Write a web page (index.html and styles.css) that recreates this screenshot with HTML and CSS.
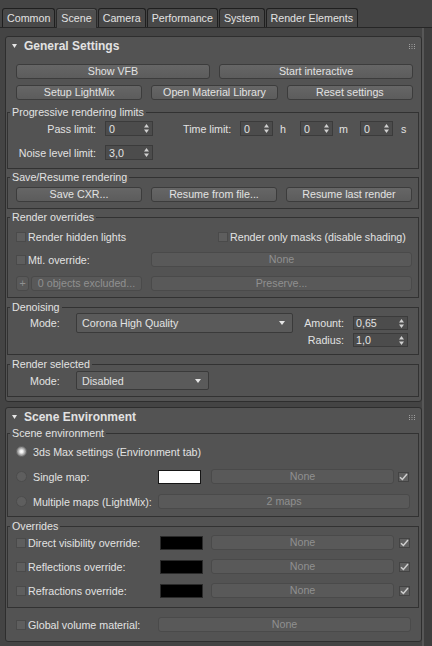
FILE: index.html
```html
<!DOCTYPE html>
<html>
<head>
<meta charset="utf-8">
<link rel="stylesheet" href="styles.css">
</head>
<body>
<div class="tabs">
  <div class="tab">Common</div>
  <div class="tab active">Scene</div>
  <div class="tab">Camera</div>
  <div class="tab">Performance</div>
  <div class="tab">System</div>
  <div class="tab">Render Elements</div>
</div>

<div class="page">
<div class="col">
<div class="rollout r1">
  <div class="rhead">
    <svg class="tri" width="5" height="4" viewBox="0 0 5 4"><polygon points="0,0 5,0 2.5,4" fill="#e6e6e6"/></svg>
    <span class="rtitle">General Settings</span>
    <svg class="grip" width="6" height="5" viewBox="0 0 6 5"><g fill="#a0a0a0"><rect x="0" y="0" width="1" height="1"/><rect x="2.5" y="0" width="1" height="1"/><rect x="5" y="0" width="1" height="1"/><rect x="0" y="2" width="1" height="1"/><rect x="2.5" y="2" width="1" height="1"/><rect x="5" y="2" width="1" height="1"/><rect x="0" y="4" width="1" height="1"/><rect x="2.5" y="4" width="1" height="1"/><rect x="5" y="4" width="1" height="1"/></g></svg>
  </div>
  <div class="btnrow two top"><div class="btn">Show VFB</div><div class="btn">Start interactive</div></div>
  <div class="btnrow three top2"><div class="btn">Setup LightMix</div><div class="btn">Open Material Library</div><div class="btn">Reset settings</div></div>

  <fieldset class="grp g-prog">
    <legend>Progressive rendering limits</legend>
    <div class="row">
      <span class="lbl lbl-lim">Pass limit:</span>
      <div class="spin sp-lim"><span>0</span><svg class="arr" width="5" height="9" viewBox="0 0 5 9"><polygon points="0,3.5 2.5,0 5,3.5" fill="#d0d0d0"/><polygon points="0,5.5 5,5.5 2.5,9" fill="#d0d0d0"/></svg></div>
      <span class="lbl lbl-time">Time limit:</span>
      <div class="spin sp-t"><span>0</span><svg class="arr" width="5" height="9" viewBox="0 0 5 9"><polygon points="0,3.5 2.5,0 5,3.5" fill="#d0d0d0"/><polygon points="0,5.5 5,5.5 2.5,9" fill="#d0d0d0"/></svg></div>
      <span class="unit u-h">h</span>
      <div class="spin sp-t"><span>0</span><svg class="arr" width="5" height="9" viewBox="0 0 5 9"><polygon points="0,3.5 2.5,0 5,3.5" fill="#d0d0d0"/><polygon points="0,5.5 5,5.5 2.5,9" fill="#d0d0d0"/></svg></div>
      <span class="unit u-m">m</span>
      <div class="spin sp-t"><span>0</span><svg class="arr" width="5" height="9" viewBox="0 0 5 9"><polygon points="0,3.5 2.5,0 5,3.5" fill="#d0d0d0"/><polygon points="0,5.5 5,5.5 2.5,9" fill="#d0d0d0"/></svg></div>
      <span class="unit u-s">s</span>
    </div>
    <div class="row gap9">
      <span class="lbl lbl-lim">Noise level limit:</span>
      <div class="spin sp-lim"><span>3,0</span><svg class="arr" width="5" height="9" viewBox="0 0 5 9"><polygon points="0,3.5 2.5,0 5,3.5" fill="#d0d0d0"/><polygon points="0,5.5 5,5.5 2.5,9" fill="#d0d0d0"/></svg></div>
    </div>
  </fieldset>

  <fieldset class="grp g-save">
    <legend>Save/Resume rendering</legend>
    <div class="btnrow three"><div class="btn">Save CXR...</div><div class="btn">Resume from file...</div><div class="btn">Resume last render</div></div>
  </fieldset>

  <fieldset class="grp g-ovr">
    <legend>Render overrides</legend>
    <div class="row ovr-a">
      <div class="cbl"><span class="chk"></span><span>Render hidden lights</span></div>
      <div class="cbl"><span class="chk"></span><span>Render only masks (disable shading)</span></div>
    </div>
    <div class="row ovr-b gap8">
      <div class="cbl"><span class="chk"></span><span>Mtl. override:</span></div>
      <div class="btn dis">None</div>
    </div>
    <div class="row ovr-c gap9">
      <div class="btn dis plus">+</div>
      <div class="btn dis excl">0 objects excluded...</div>
      <div class="btn dis pres">Preserve...</div>
    </div>
  </fieldset>

  <fieldset class="grp g-den">
    <legend>Denoising</legend>
    <div class="den">
      <div class="modebox">
        <span class="mode">Mode:</span>
        <div class="dd dd-den"><span>Corona High Quality</span><svg width="6" height="4" viewBox="0 0 6 4"><polygon points="0,0 6,0 3,4" fill="#e6e6e6"/></svg></div>
      </div>
      <div class="dcol">
        <div class="drow"><span class="dlbl">Amount:</span><div class="spin sp-d"><span>0,65</span><svg class="arr" width="5" height="9" viewBox="0 0 5 9"><polygon points="0,3.5 2.5,0 5,3.5" fill="#d0d0d0"/><polygon points="0,5.5 5,5.5 2.5,9" fill="#d0d0d0"/></svg></div></div>
        <div class="drow"><span class="dlbl">Radius:</span><div class="spin sp-d"><span>1,0</span><svg class="arr" width="5" height="9" viewBox="0 0 5 9"><polygon points="0,3.5 2.5,0 5,3.5" fill="#d0d0d0"/><polygon points="0,5.5 5,5.5 2.5,9" fill="#d0d0d0"/></svg></div></div>
      </div>
    </div>
  </fieldset>

  <fieldset class="grp g-sel">
    <legend>Render selected</legend>
    <div class="modebox">
      <span class="mode">Mode:</span>
      <div class="dd dd-sel"><span>Disabled</span><svg width="6" height="4" viewBox="0 0 6 4"><polygon points="0,0 6,0 3,4" fill="#e6e6e6"/></svg></div>
    </div>
  </fieldset>
</div>

<div class="rollout r2">
  <div class="rhead">
    <svg class="tri" width="5" height="4" viewBox="0 0 5 4"><polygon points="0,0 5,0 2.5,4" fill="#e6e6e6"/></svg>
    <span class="rtitle">Scene Environment</span>
    <svg class="grip" width="6" height="5" viewBox="0 0 6 5"><g fill="#a0a0a0"><rect x="0" y="0" width="1" height="1"/><rect x="2.5" y="0" width="1" height="1"/><rect x="5" y="0" width="1" height="1"/><rect x="0" y="2" width="1" height="1"/><rect x="2.5" y="2" width="1" height="1"/><rect x="5" y="2" width="1" height="1"/><rect x="0" y="4" width="1" height="1"/><rect x="2.5" y="4" width="1" height="1"/><rect x="5" y="4" width="1" height="1"/></g></svg>
  </div>

  <fieldset class="grp g-env">
    <legend>Scene environment</legend>
    <div class="frow">
      <div class="rbl"><span class="radio on"></span><span>3ds Max settings (Environment tab)</span></div>
    </div>
    <div class="frow gap10">
      <div class="rbl w142"><span class="radio"></span><span>Single map:</span></div>
      <span class="sw white"></span>
      <div class="btn dis nb e-nb">None</div>
      <span class="chk on e-ck"><svg width="9" height="8" viewBox="0 0 9 8"><path d="M1 4.2 L3.4 6.5 L8 1" fill="none" stroke="#cfcfcf" stroke-width="1.5"/></svg></span>
    </div>
    <div class="frow gap10">
      <div class="rbl w142"><span class="radio"></span><span>Multiple maps (LightMix):</span></div>
      <div class="btn dis maps">2 maps</div>
    </div>
  </fieldset>

  <fieldset class="grp g-ov2">
    <legend>Overrides</legend>
    <div class="frow">
      <div class="cbl w144"><span class="chk"></span><span>Direct visibility override:</span></div>
      <span class="sw black"></span>
      <div class="btn dis nb o-nb">None</div>
      <span class="chk on o-ck"><svg width="9" height="8" viewBox="0 0 9 8"><path d="M1 4.2 L3.4 6.5 L8 1" fill="none" stroke="#cfcfcf" stroke-width="1.5"/></svg></span>
    </div>
    <div class="frow gap9">
      <div class="cbl w144"><span class="chk"></span><span>Reflections override:</span></div>
      <span class="sw black"></span>
      <div class="btn dis nb o-nb">None</div>
      <span class="chk on o-ck"><svg width="9" height="8" viewBox="0 0 9 8"><path d="M1 4.2 L3.4 6.5 L8 1" fill="none" stroke="#cfcfcf" stroke-width="1.5"/></svg></span>
    </div>
    <div class="frow gap9">
      <div class="cbl w144"><span class="chk"></span><span>Refractions override:</span></div>
      <span class="sw black"></span>
      <div class="btn dis nb o-nb">None</div>
      <span class="chk on o-ck"><svg width="9" height="8" viewBox="0 0 9 8"><path d="M1 4.2 L3.4 6.5 L8 1" fill="none" stroke="#cfcfcf" stroke-width="1.5"/></svg></span>
    </div>
  </fieldset>

  <div class="frow grow">
    <div class="cbl w142"><span class="chk"></span><span>Global volume material:</span></div>
    <div class="btn dis gvm">None</div>
  </div>
</div>
</div>
<div class="scroll"></div>
</div>
</body>
</html>
```
FILE: styles.css
```css
* { box-sizing: border-box; }

body {
  margin: 0;
  padding-top: 8px;
  width: 432px;
  height: 646px;
  overflow: hidden;
  background: #444444;
  font-family: "Liberation Sans", Arial, sans-serif;
  font-size: 10.7px;
  color: #e2e2e2;
}

/* tabs */
.tabs {
  display: flex;
  align-items: flex-start;
  gap: 1px;
  height: 20px;
  padding-left: 2px;
  border-bottom: 1px solid #262626;
}
.tab {
  height: 19px;
  line-height: 18px;
  padding: 0 4px;
  border: 1px solid #1f1f1f;
  border-bottom: 0;
  border-radius: 3px 3px 0 0;
  background: #484848;
  white-space: nowrap;
}
.tab.active {
  height: 20px;
  background: #4f4f4f;
  border-color: #2a2a2a;
  box-shadow: inset 0 1px 0 #5e5e5e;
}

.page { display: flex; align-items: stretch; height: 618px; }
.col { width: 422px; flex: none; }
.scroll {
  flex: 1;
  border-left: 2px solid #575757;
  background: #3e3e3e;
}

/* rollouts */
.rollout {
  width: 417px;
  margin-left: 5px;
  background: #535353;
  border: 1px solid #2e2e2e;
  border-radius: 3px;
  padding: 0 2px 4px 1px;
}
.r1 { margin-top: 8px; }
.r2 { margin-top: 5px; padding-bottom: 9px; }

.rhead {
  display: flex;
  align-items: center;
  height: 18px;
  padding: 0 4px 0 5px;
}
.tri { margin-right: 7px; }
.rtitle { font-weight: bold; font-size: 12px; flex: 1; }

.btnrow { display: grid; column-gap: 9px; }
.btnrow.two { grid-template-columns: 1fr 1fr; }
.btnrow.three { grid-template-columns: 1fr 1fr 1fr; }
.btnrow.top { margin: 9px 6px 0 9px; }
.btnrow.top2 { margin: 6px 6px 0 9px; }

.btn {
  height: 15px;
  line-height: 13px;
  text-align: center;
  white-space: nowrap;
  background: linear-gradient(#666666, #5c5c5c);
  border: 1px solid #3c3c3c;
  border-radius: 3px;
}
.btn.dis {
  background: #595959;
  border-color: #4a4a4a;
  color: #909090;
}

/* group boxes */
.grp {
  margin: 0;
  min-width: 0;
  border: 1px solid #323232;
  padding: 3px 6px 8px 8px;
}
.grp legend {
  margin-left: -6px;
  padding: 0 2px;
  height: 12px;
  line-height: 12px;
  color: #e2e2e2;
}
.g-prog { margin-top: 6px; padding-top: 3px; padding-bottom: 8px; }
.g-save { margin-top: 2px; padding-top: 4px; padding-bottom: 6px; }
.g-ovr { margin-top: 2px; padding-top: 6px; padding-bottom: 6px; }
.g-den { margin-top: 3px; padding-top: 0; padding-bottom: 7px; }
.g-sel { margin-top: 3px; padding-top: 1px; padding-bottom: 6px; }
.g-env { margin-top: 1px; padding-top: 5px; padding-bottom: 7px; }
.g-ov2 { margin-top: 3px; padding-top: 3px; padding-bottom: 9px; }

.row { display: flex; align-items: center; height: 15px; }
.gap8 { margin-top: 8px; }
.gap9 { margin-top: 9px; }
.gap10 { margin-top: 10px; }

.lbl { white-space: nowrap; }
.lbl-lim { width: 80px; text-align: right; margin-right: 9px; }
.lbl-time { width: 57px; margin-left: 30px; }
.unit { white-space: nowrap; }
.u-h { width: 27px; padding-left: 7px; }
.u-m { width: 27px; padding-left: 6px; }
.u-s { padding-left: 8px; }

.spin {
  display: flex;
  align-items: center;
  justify-content: space-between;
  height: 15px;
  padding: 0 3px 0 3px;
  background: #4c4c4c;
  border: 1px solid #3b3b3b;
}
.sp-lim { width: 48px; }
.sp-t { width: 33px; }
.sp-d { width: 55px; height: 14px; padding-left: 2px; }

/* checkboxes */
.cbl { display: flex; align-items: center; white-space: nowrap; }
.chk {
  flex: none;
  width: 10px;
  height: 10px;
  margin-right: 2px;
  background: #5e5e5e;
  border: 1px solid #4a4a4a;
}
.chk.on {
  width: 11px;
  height: 10px;
  margin-right: 0;
  display: flex;
  align-items: center;
  justify-content: center;
  background: #606060;
  border: 1px solid #434343;
}

.ovr-a { display: grid; grid-template-columns: 202px 1fr; }
.ovr-b { display: grid; grid-template-columns: 135px 1fr; }
.plus { width: 13px; flex: none; padding: 0; }
.excl { width: 111px; margin-left: 2px; flex: none; }
.pres { flex: 1; margin-left: 9px; }

/* denoising */
.den { display: flex; align-items: flex-start; }
.modebox { display: flex; align-items: center; }
.mode { width: 60px; padding-left: 14px; }
.dd {
  display: flex;
  align-items: center;
  justify-content: space-between;
  padding: 0 7px 0 5px;
  background: #5a5a5a;
  border: 1px solid #3a3a3a;
  border-radius: 2px;
}
.dd-den { width: 217px; height: 20px; }
.dd-sel { width: 133px; height: 19px; }
.dcol { margin-left: 7px; margin-top: 3px; display: flex; flex-direction: column; gap: 3px; }
.drow { display: flex; align-items: center; height: 14px; }
.dlbl { width: 44px; text-align: right; margin-right: 9px; }

/* scene env + overrides rows */
.frow { display: flex; align-items: center; height: 15px; }
.w142 { width: 142px; flex: none; }
.w144 { width: 144px; flex: none; }
.rbl { display: flex; align-items: center; white-space: nowrap; }
.radio {
  flex: none;
  width: 11px;
  height: 11px;
  margin-right: 6px;
  border-radius: 50%;
  background: #5e5e5e;
  border: 1px solid #4c4c4c;
}
.radio.on {
  background: radial-gradient(circle, #ffffff 0, #f0f0f0 1.5px, #b5b5b5 3px, #7d7d7d 5px);
  border-color: #6a6a6a;
}
.sw { display: block; flex: none; width: 43px; height: 14px; }
.sw.white { background: #ffffff; border: 1px solid #151515; }
.sw.black { background: #000000; border: 1px solid #2a2a2a; }
.nb { width: 183px; flex: none; }
.e-nb { margin-left: 10px; }
.e-ck { margin-left: 4px; }
.o-nb { margin-left: 8px; }
.o-ck { margin-left: 5px; }
.maps { width: 252px; flex: none; }

.grow { margin: 9px 0 0 9px; }
.gvm { width: 253px; flex: none; }
```
